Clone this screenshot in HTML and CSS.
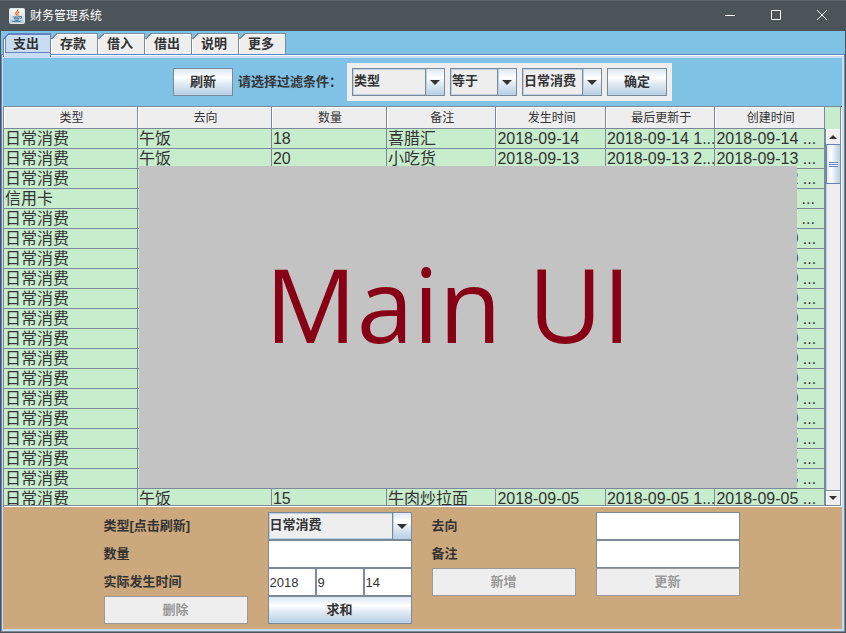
FILE: index.html
```html
<!DOCTYPE html>
<html lang="zh-CN">
<head>
<meta charset="utf-8">
<title>财务管理系统</title>
<link rel="stylesheet" href="styles.css">
</head>
<body>
<header class="titlebar">
  <svg class="app-icon" width="16" height="16" viewBox="0 0 16 16" aria-hidden="true">
    <defs><linearGradient id="tile" x1="0" y1="0" x2="0" y2="1"><stop offset="0" stop-color="#fff"/><stop offset="1" stop-color="#b9cad8"/></linearGradient></defs>
    <rect x=".5" y=".5" width="15" height="15" rx="1" fill="url(#tile)" stroke="#dde5ea"/>
    <path d="M8.6 1.4c1 1.8-2.3 2.600-1.800 4.200.2.700.9 1.100.8 2M10.400 3.600C8.600 4.400 8.200 5.400 9 6.400c.3.500.1.900-.3 1.400" fill="none" stroke="#e8762c" stroke-width="1.200"/>
    <path d="M4.500 8.500c-1 .8 5.500.9 6.500 0M5 10.300c1.500.6 4 .6 5.500 0M5.500 12c1.200.5 3.200.5 4.500 0M11 8.600c2-.6 2.200 1.400.2 2.200M3.500 12.600c-1.600 1.200 6.500 1.700 8.800.2" fill="none" stroke="#4a7d9f" stroke-width="1.100"/>
  </svg>
  <h1 class="title">财务管理系统</h1>
  <button class="win-btn" type="button" aria-label="最小化"><svg width="12" height="12" viewBox="0 0 12 12"><path d="M1 5.500h10"/></svg></button>
  <button class="win-btn" type="button" aria-label="最大化"><svg width="12" height="12" viewBox="0 0 12 12"><path d="M1.500 .5h9v9h-9z"/></svg></button>
  <button class="win-btn" type="button" aria-label="关闭"><svg width="12" height="12" viewBox="0 0 12 12"><path d="M1 0l10 10M11 0L1 10"/></svg></button>
</header>

<div class="frame">
  <nav class="tabs" role="tablist">
    <button class="tab tab-active" type="button" role="tab" aria-selected="true"><span class="tab-focus">支出</span></button>
    <button class="tab" type="button" role="tab">存款</button>
    <button class="tab" type="button" role="tab">借入</button>
    <button class="tab" type="button" role="tab">借出</button>
    <button class="tab" type="button" role="tab">说明</button>
    <button class="tab" type="button" role="tab">更多</button>
  </nav>

  <main class="pane">
    <div class="pane-body">
      <section class="filter">
        <button class="btn btn-small" type="button">刷新</button>
        <label class="filter-label" for="f-field">请选择过滤条件：</label>
        <div class="filter-group">
          <span class="combo combo-field">
            <select id="f-field"><option>类型</option></select>
            <span class="combo-arrow"></span>
          </span>
          <span class="combo combo-op">
            <select aria-label="条件"><option>等于</option></select>
            <span class="combo-arrow"></span>
          </span>
          <span class="combo combo-value">
            <select aria-label="值"><option>日常消费</option></select>
            <span class="combo-arrow"></span>
          </span>
          <button class="btn btn-small" type="button">确定</button>
        </div>
      </section>

      <section class="grid-pane">
        <div class="viewport">
          <table class="records">
            <colgroup><col class="c-wide"><col class="c-wide"><col class="c-amount"><col><col><col><col></colgroup>
            <thead>
              <tr><th>类型</th><th>去向</th><th>数量</th><th>备注</th><th>发生时间</th><th>最后更新于</th><th>创建时间</th></tr>
            </thead>
            <tbody>
              <tr><td>日常消费</td><td>午饭</td><td>18</td><td>喜腊汇</td><td>2018-09-14</td><td>2018-09-14 1...</td><td>2018-09-14 ...</td></tr>
              <tr><td>日常消费</td><td>午饭</td><td>20</td><td>小吃货</td><td>2018-09-13</td><td>2018-09-13 2...</td><td>2018-09-13 ...</td></tr>
              <tr><td>日常消费</td><td></td><td></td><td></td><td></td><td></td><td>2018-09-12 ...</td></tr>
              <tr><td>信用卡</td><td></td><td></td><td></td><td></td><td></td><td>2018-09-11 ...</td></tr>
              <tr><td>日常消费</td><td></td><td></td><td></td><td></td><td></td><td>2018-09-11 ...</td></tr>
              <tr><td>日常消费</td><td></td><td></td><td></td><td></td><td></td><td>2018-09-10 ...</td></tr>
              <tr><td>日常消费</td><td></td><td></td><td></td><td></td><td></td><td>2018-09-10 ...</td></tr>
              <tr><td>日常消费</td><td></td><td></td><td></td><td></td><td></td><td>2018-09-10 ...</td></tr>
              <tr><td>日常消费</td><td></td><td></td><td></td><td></td><td></td><td>2018-09-10 ...</td></tr>
              <tr><td>日常消费</td><td></td><td></td><td></td><td></td><td></td><td>2018-09-10 ...</td></tr>
              <tr><td>日常消费</td><td></td><td></td><td></td><td></td><td></td><td>2018-09-10 ...</td></tr>
              <tr><td>日常消费</td><td></td><td></td><td></td><td></td><td></td><td>2018-09-10 ...</td></tr>
              <tr><td>日常消费</td><td></td><td></td><td></td><td></td><td></td><td>2018-09-10 ...</td></tr>
              <tr><td>日常消费</td><td></td><td></td><td></td><td></td><td></td><td>2018-09-10 ...</td></tr>
              <tr><td>日常消费</td><td></td><td></td><td></td><td></td><td></td><td>2018-09-10 ...</td></tr>
              <tr><td>日常消费</td><td></td><td></td><td></td><td></td><td></td><td>2018-09-06 ...</td></tr>
              <tr><td>日常消费</td><td></td><td></td><td></td><td></td><td></td><td>2018-09-05 ...</td></tr>
              <tr><td>日常消费</td><td></td><td></td><td></td><td></td><td></td><td>2018-09-05 ...</td></tr>
              <tr><td>日常消费</td><td>午饭</td><td>15</td><td>牛肉炒拉面</td><td>2018-09-05</td><td>2018-09-05 1...</td><td>2018-09-05 ...</td></tr>
            </tbody>
          </table>
        </div>
        <div class="scroll-side">
          <div class="scroll-corner"></div>
          <div class="scrollbar">
            <button class="scroll-btn" type="button" aria-label="向上"><span class="arrow-up"></span></button>
            <div class="scroll-track"><div class="scroll-thumb"><span class="grip"></span></div></div>
            <button class="scroll-btn scroll-down" type="button" aria-label="向下"><span class="arrow-down"></span></button>
          </div>
        </div>
        <div class="cover"><span>Main UI</span></div>
      </section>

      <form class="editor">
        <label for="e-type">类型[点击刷新]</label>
        <span class="combo">
          <select id="e-type"><option>日常消费</option></select>
          <span class="combo-arrow"></span>
        </span>
        <label for="e-target">去向</label>
        <input class="field" id="e-target" type="text">

        <label for="e-amount">数量</label>
        <input class="field" id="e-amount" type="text">
        <label for="e-note">备注</label>
        <input class="field" id="e-note" type="text">

        <label for="e-year">实际发生时间</label>
        <div class="date">
          <input class="field" id="e-year" type="text" value="2018">
          <input class="field" type="text" value="9" aria-label="月">
          <input class="field" type="text" value="14" aria-label="日">
        </div>
        <button class="btn" type="button" disabled>新增</button>
        <button class="btn" type="button" disabled>更新</button>

        <button class="btn" type="button" disabled>删除</button>
        <button class="btn" type="button">求和</button>
      </form>
    </div>
  </main>
</div>
</body>
</html>
```
FILE: styles.css
```css
:root {
  --dark: #4b5459;
  --sky: #80c1e6;
  --line: #7a8a99;
  --accent: #6382bf;
  --pale: #c8ddf2;
  --soft: #b8cfe5;
  --panel: #eeeeee;
  --green: #c7edcc;
  --tan: #cca97c;
  --ink: #333333;
  --metal: linear-gradient(#dde8f3, #ffffff 32%, #dde8f3 60%, #b8cfe5);
}

* { box-sizing: border-box; }

body {
  margin: 0;
  height: 100vh;
  display: flex;
  flex-direction: column;
  overflow: hidden;
  background: var(--dark);
  color: var(--ink);
  font: bold 13px/16px "Liberation Sans", "Noto Sans CJK SC", sans-serif;
}

button, select, input { font: inherit; color: inherit; margin: 0; }

/* Title bar */
.titlebar {
  flex: none;
  height: 31px;
  display: flex;
  align-items: center;
  padding: 0 1px 0 9px;
  border-top: 1px solid #5b666c;
}
.app-icon { display: block; }
.title {
  flex: 1;
  margin: 0 0 0 5px;
  color: #fff;
  font-size: 12px;
  font-weight: normal;
}
.win-btn {
  width: 46px;
  height: 30px;
  padding: 0;
  border: 0;
  background: none;
  display: flex;
  align-items: center;
  justify-content: center;
}
.win-btn svg { fill: none; stroke: #fff; }

.frame {
  flex: 1;
  min-height: 0;
  display: flex;
  flex-direction: column;
  padding: 0 1px 1px;
}

/* Tabs */
.tabs {
  flex: none;
  display: flex;
  height: 23px;
  padding: 2px 0 0 2px;
  background: var(--sky);
}
.tab {
  position: relative;
  width: 47px;
  height: 21px;
  padding: 0 0 0 9px;
  border: 1px solid var(--line);
  border-width: 1px 1px 0 0;
  background: var(--panel);
  box-shadow: inset 1px 1px #fff;
  line-height: 20px;
  text-align: left;
}
.tab::before {
  content: "";
  position: absolute;
  left: 0;
  top: -1px;
  width: 6px;
  height: 6px;
  background: linear-gradient(135deg, var(--sky) 0 45%, var(--line) 45% 60%, transparent 60%);
}
.tab-active {
  z-index: 1;
  width: 48px;
  height: 24px;
  padding: 0;
  border: 1px solid var(--accent);
  border-bottom: 0;
  background: var(--pale);
}
.tab-active::before {
  left: -1px;
  background: linear-gradient(135deg, var(--sky) 0 45%, var(--accent) 45% 60%, transparent 60%);
}
.tab-focus {
  display: block;
  height: 19px;
  margin: 0 0 4px 1px;
  padding-left: 7px;
  border: 1px solid var(--accent);
  border-width: 1px 0 1px 1px;
  line-height: 18px;
}

/* Tab pane */
.pane {
  flex: 1;
  min-height: 0;
  display: flex;
  border: 1px solid var(--accent);
  border-right-color: var(--line);
  border-bottom-color: var(--line);
}
.pane-body {
  flex: 1;
  min-width: 0;
  display: flex;
  flex-direction: column;
  border: 2px solid var(--pale);
  border-left-width: 1px;
  box-shadow: 0 -1px #fff;
  margin-top: 1px;
}

/* Filter bar */
.filter {
  flex: none;
  height: 48px;
  display: flex;
  align-items: center;
  justify-content: center;
  gap: 5px;
  background: var(--sky);
}
.filter-label { width: 104px; white-space: nowrap; }
.filter-group {
  display: flex;
  gap: 5px;
  padding: 5px;
  background: var(--panel);
}
.btn {
  height: 28px;
  padding: 0;
  border: 1px solid var(--line);
  background: var(--metal);
}
.btn:disabled {
  border-color: #999;
  background: var(--panel);
  color: #999;
}
.btn-small { width: 60px; }

.combo {
  display: grid;
  height: 28px;
}
.combo > * { grid-area: 1 / 1; }
.combo select {
  width: 100%;
  padding: 0 20px 2px 1px;
  appearance: none;
  border: 1px solid var(--line);
  border-radius: 0;
  background: var(--panel);
  box-shadow: inset 0 0 0 1px var(--soft);
}
.combo-arrow {
  justify-self: end;
  width: 20px;
  display: flex;
  align-items: center;
  justify-content: center;
  border: 1px solid var(--line);
  background: var(--metal);
  box-shadow: inset 1px 0 var(--soft);
  pointer-events: none;
}
.combo-arrow::before {
  content: "";
  border: 5px solid transparent;
  border-top-color: var(--ink);
  border-bottom: 0;
}
.combo-field { width: 93px; }
.combo-op { width: 67px; }
.combo-value { width: 80px; }

/* Records table */
.grid-pane {
  position: relative;
  flex: 1;
  min-height: 0;
  display: grid;
  grid-template: minmax(0, 1fr) / minmax(0, 1fr) 15px;
  margin: 0 1px 1px 0;
  border: 1px solid var(--line);
  box-shadow: 1px 1px #fff;
  background: var(--green);
}
.viewport { min-width: 0; overflow: hidden; }
.records {
  width: 100%;
  table-layout: fixed;
  border-collapse: separate;
  border-spacing: 0;
  font-weight: normal;
}
.c-wide { width: 16.32%; }
.c-amount { width: 14%; }
.records th {
  height: 22px;
  padding: 0 0 0 2px;
  border: 1px solid var(--line);
  border-width: 0 1px 1px 0;
  background: var(--panel);
  box-shadow: inset 1px 1px #fff;
  font-size: 12px;
  font-weight: normal;
  line-height: 20px;
}
.records td {
  height: 20px;
  padding: 0 0 0 1px;
  border: 1px solid var(--line);
  border-width: 0 1px 1px 0;
  background: var(--green);
  font-size: 16px;
  line-height: 19px;
  white-space: nowrap;
  overflow: hidden;
}

.scroll-side { display: flex; flex-direction: column; }
.scroll-corner { flex: none; height: 22px; }
.scrollbar {
  flex: 1;
  display: flex;
  flex-direction: column;
  border-left: 1px solid var(--line);
  background: var(--panel);
}
.scroll-btn {
  flex: none;
  height: 15px;
  padding: 0;
  border: 0;
  background: var(--panel);
  box-shadow: inset 1px 1px #fff;
  display: flex;
  align-items: center;
  justify-content: center;
}
.scroll-down { border-top: 1px solid var(--line); }
.arrow-up, .arrow-down { border: 4px solid transparent; }
.arrow-up { border-top: 0; border-bottom-color: var(--ink); }
.arrow-down { border-bottom: 0; border-top-color: var(--ink); }
.scroll-track { flex: 1; box-shadow: inset 1px 1px var(--soft); }
.scroll-thumb {
  height: 40px;
  display: flex;
  align-items: center;
  justify-content: center;
  border: 1px solid var(--accent);
  border-right: 0;
  background: linear-gradient(90deg, #dde8f3, #ffffff 32%, #dde8f3 60%, #b8cfe5);
}
.grip {
  width: 9px;
  height: 5px;
  background: repeating-linear-gradient(var(--accent) 0 1px, #fff 1px 2px);
}

.cover {
  position: absolute;
  top: 59px;
  right: 43px;
  bottom: 17px;
  left: 135px;
  display: flex;
  align-items: center;
  justify-content: center;
  padding: 0 40px 46px 0;
  background: #c3c3c3;
  color: #880015;
  font: 102px/1 "Open Sans", sans-serif;
  white-space: nowrap;
}

/* Edit form */
.editor {
  flex: none;
  display: grid;
  grid-template-columns: repeat(4, 144px);
  grid-auto-rows: 28px;
  column-gap: 20px;
  justify-content: center;
  align-items: center;
  padding: 5px 2px 5px 0;
  background: var(--tan);
}
.field {
  width: 100%;
  min-width: 0;
  height: 28px;
  padding: 0 0 0 1px;
  border: 1px solid var(--line);
  border-radius: 0;
  background: #fff;
  font-size: 13px;
  font-weight: normal;
}
.date { display: flex; }
```
